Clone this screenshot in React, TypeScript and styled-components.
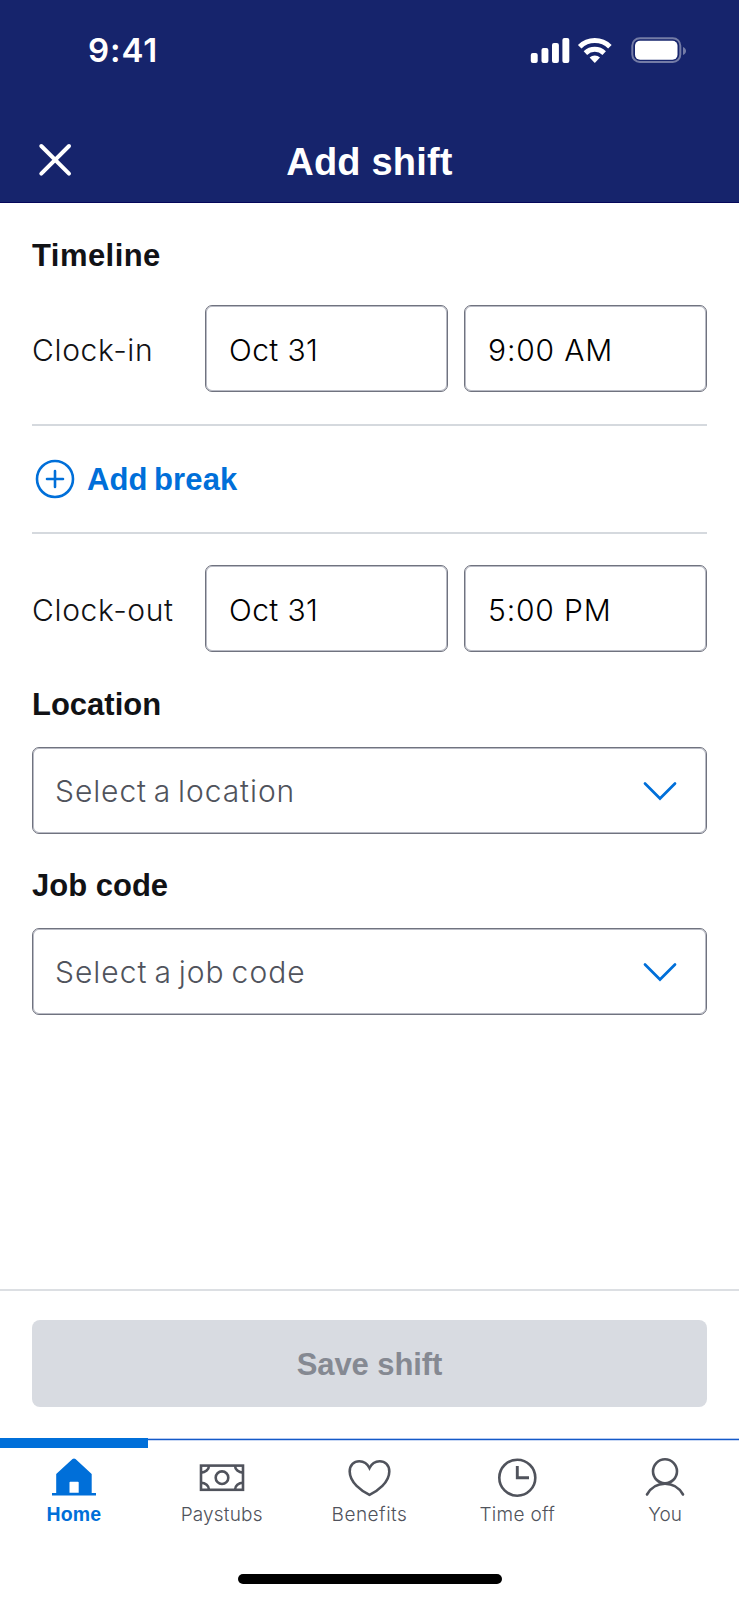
import React from 'react';
import styled, { createGlobalStyle } from 'styled-components';

const Global = createGlobalStyle`
  body { margin: 0; background: #fff; }
  *, *::before, *::after { box-sizing: border-box; }
  button { font: inherit; border: 0; background: none; padding: 0; margin: 0; }
`;

const bold = '"Liberation Sans", Arial, sans-serif';
const light = 'Inter, "Liberation Sans", sans-serif';

const Screen = styled.div`
  width: 739px;
  height: 1600px;
  display: flex;
  flex-direction: column;
  background: #fff;
  color: #111215;
  overflow: hidden;
`;

const Header = styled.header`
  height: 203px;
  flex: none;
  background: #16246c;
  border-bottom: 1px solid #05075a;
  color: #fff;
  display: flex;
  flex-direction: column;
`;

const StatusBar = styled.div`
  height: 118px;
  padding: 30px 53px 0 88px;
  display: flex;
  align-items: flex-start;
  justify-content: space-between;
  svg { margin-top: 6px; }
`;

const Clock = styled.span`
  font: 600 33px/40px ${light};
  letter-spacing: 0.9px;
`;

const TitleBar = styled.div`
  height: 84px;
  padding: 0 32px;
  display: grid;
  grid-template-columns: 46px 1fr 46px;
  align-items: center;
`;

const CloseButton = styled.button`
  width: 46px;
  height: 84px;
  color: #fff;
  svg { display: block; }
`;

const Title = styled.h1`
  margin: 4px 0 0;
  font: 700 38px/46px ${bold};
  letter-spacing: 0.2px;
  text-align: center;
`;

const Form = styled.main`
  flex: 1;
  padding: 34px 32px 0;
  display: flex;
  flex-direction: column;
`;

const Heading = styled.h2<{ $track?: number }>`
  margin: 0;
  height: 38px;
  font: 700 31px/38px ${bold};
  letter-spacing: ${p => p.$track ?? 0}px;
`;

const FieldRow = styled.div<{ $top: number; $bottom?: number }>`
  margin: ${p => p.$top}px 0 ${p => p.$bottom ?? 0}px;
  display: grid;
  grid-template-columns: 157px 243px 243px;
  column-gap: 16px;
  align-items: center;
`;

const Label = styled.label`
  font: 300 30px/38px ${light};
  letter-spacing: 0.65px;
  white-space: nowrap;
  padding-top: 3px;
`;

const Field = styled.div<{ $track?: number }>`
  height: 87px;
  border: 1px solid #70737f;
  box-shadow: inset 0 0 0 1px #b9bbc5;
  border-radius: 7px;
  padding: 3px 23px 0;
  display: flex;
  align-items: center;
  font: 300 30px/38px ${light};
  letter-spacing: ${p => p.$track ?? 0}px;
  color: #000;
`;

const SelectBox = styled(Field)`
  justify-content: space-between;
  margin-top: 23px;
  margin-bottom: 33px;
  color: #50535c;
  padding: 0 29px 0 22px;
  word-spacing: -2.5px;
`;

const BreakRow = styled.div`
  margin-top: 32px;
  height: 110px;
  border-top: 2px solid #d5d9de;
  border-bottom: 2px solid #d5d9de;
  display: flex;
  align-items: center;
`;

const AddBreak = styled.button`
  display: flex;
  align-items: center;
  gap: 12px;
  padding-left: 3px;
  color: #006fd9;
  font: 700 31px/38px ${bold};
  letter-spacing: 0.15px;
  word-spacing: -2.5px;
  span { padding-top: 2px; }
`;

const Footer = styled.footer`
  height: 149px;
  flex: none;
  border-top: 2px solid #dcdfe3;
  padding: 29px 32px 0;
`;

const SaveButton = styled.button`
  width: 100%;
  height: 87px;
  padding-top: 3px;
  border-radius: 8px;
  background: #d8dbe1;
  color: #858992;
  font: 700 31px/38px ${bold};
  letter-spacing: -0.1px;
`;

const TabBar = styled.nav`
  height: 136px;
  flex: none;
  display: grid;
  grid-template-columns: repeat(5, 1fr);
`;

const Tab = styled.a<{ $active?: boolean; $track?: number }>`
  padding-top: 20px;
  box-shadow: ${p =>
    p.$active
      ? 'inset 0 10px #006fd9'
      : 'inset 0 1px #b5caf0, inset 0 2px #1459c8, inset 0 3px #c9d8f4'};
  display: flex;
  flex-direction: column;
  align-items: center;
  color: ${p => (p.$active ? '#006fd9' : '#50535c')};
  font: ${p => (p.$active ? `700 19.5px/26px ${bold}` : `300 19px/26px ${light}`)};
  letter-spacing: ${p => p.$track ?? 0}px;
  svg { display: block; margin-bottom: ${p => (p.$active ? 3 : 4)}px; }
`;

const HomeIndicator = styled.div`
  width: 264px;
  height: 10px;
  margin: 0 auto 16px;
  flex: none;
  border-radius: 5px;
  background: #000;
`;

const StatusIcons = () => (
  <svg width="156" height="28" viewBox="530 36 156 28" fill="#fff">
    <rect x="530.8" y="53" width="6.9" height="10" rx="2" />
    <rect x="541.5" y="48" width="6.9" height="15" rx="2" />
    <rect x="552" y="43" width="6.9" height="20" rx="2" />
    <rect x="562.4" y="38" width="6.9" height="25" rx="2" />
    <g fill="none" stroke="#fff" strokeWidth="5">
      <path d="M579.7 46.7a21.5 21.5 0 0 1 30.2 0" />
      <path d="M585.4 53.1a13.6 13.6 0 0 1 18.8 0" />
    </g>
    <path d="M589.6 57.6a7.5 7.5 0 0 1 10.4 0l-5.2 5.4z" />
    <rect x="632.3" y="38.2" width="48" height="23.800" rx="7.5" fill="none" stroke="#747ca6" strokeWidth="2" />
    <rect x="635" y="40.7" width="42.5" height="19" rx="5" />
    <path d="M683 47c4 1.5 4 6.5 0 8z" fill="#747ca6" />
  </svg>
);

const Chevron = () => (
  <svg width="34" height="20" viewBox="0 0 34 20" fill="none" stroke="#006fd9" strokeWidth="2.7" strokeLinecap="round">
    <path d="M2 2.5 17 17.5 32 2.5" />
  </svg>
);

const HomeIcon = () => (
  <svg width="46" height="40" viewBox="0 0 46 40" fill="currentColor">
    <path fillRule="evenodd" d="M21.5 1q1.5-1.2 3 0L40.7 16v19H45v2.5H1V35h4.2V16zM18.5 24.5v10.3h9.2V24.5q0-.8-.8-.8h-7.6q-.8 0-.8.8z" />
  </svg>
);

const line = { fill: 'none', stroke: 'currentColor', strokeWidth: 2.6 };

const MoneyIcon = () => (
  <svg width="46" height="40" viewBox="0 0 46 40" {...line}>
    <rect x="2" y="7.6" width="42" height="24.2" />
    <circle cx="23" cy="19.7" r="6.3" />
    <path d="M10 7.600a8 7 0 0 1-8 7M36 7.6a8 7 0 0 0 8 7M10 31.800a8 7 0 0 0-8-7M36 31.8a8 7 0 0 1 8-7" />
  </svg>
);

const HeartIcon = () => (
  <svg width="46" height="40" viewBox="0 0 46 40" {...line}>
    <path d="M23.5 36.800C15.500 33 3.700 24.500 3.700 13.500 3.700 7 8 3.200 13.300 3.200 18 3.200 21.500 5.800 23.500 10 25.500 5.800 29 3.200 33.700 3.200 39 3.200 43.300 7 43.300 13.500 43.300 24.500 31.500 33 23.500 36.800z" />
  </svg>
);

const ClockIcon = () => (
  <svg width="46" height="40" viewBox="0 0 46 40" {...line}>
    <circle cx="23.3" cy="19.7" r="18" />
    <path d="M23.3 8V19.7h11.700" strokeWidth="2.9" />
  </svg>
);

const PersonIcon = () => (
  <svg width="46" height="40" viewBox="0 0 46 40" {...line}>
    <circle cx="23" cy="13.3" r="12" />
    <path d="M5 36.5C9 29.5 15.5 25.8 23 25.8S37 29.5 41 36.5" strokeLinecap="round" />
  </svg>
);

export default function App() {
  return (
    <Screen>
      <Global />
      <Header>
        <StatusBar>
          <Clock>9:41</Clock>
          <StatusIcons />
        </StatusBar>
        <TitleBar>
          <CloseButton aria-label="Close">
            <svg width="46" height="46" viewBox="0 0 46 46" stroke="currentColor" strokeWidth="4" strokeLinecap="round">
              <path d="M9.3 9 37 36.7M37 9 9.3 36.7" />
            </svg>
          </CloseButton>
          <Title>Add shift</Title>
        </TitleBar>
      </Header>
      <Form>
        <Heading $track={0.45}>Timeline</Heading>
        <FieldRow $top={30}>
          <Label>Clock-in</Label>
          <Field $track={0.4}>Oct 31</Field>
          <Field $track={0.85}>9:00 AM</Field>
        </FieldRow>
        <BreakRow>
          <AddBreak>
            <svg width="40" height="40" viewBox="0 0 40 40" fill="none" stroke="currentColor" strokeWidth="2.6">
              <circle cx="20" cy="20" r="18" />
              <path d="M20 12v16M12 20h16" strokeLinecap="round" />
            </svg>
            <span>Add break</span>
          </AddBreak>
        </BreakRow>
        <FieldRow $top={31} $bottom={34}>
          <Label>Clock-out</Label>
          <Field $track={0.4}>Oct 31</Field>
          <Field $track={0.85}>5:00 PM</Field>
        </FieldRow>
        <Heading>Location</Heading>
        <SelectBox $track={0.92}>Select a location<Chevron /></SelectBox>
        <Heading>Job code</Heading>
        <SelectBox $track={1}>Select a job code<Chevron /></SelectBox>
      </Form>
      <Footer>
        <SaveButton>Save shift</SaveButton>
      </Footer>
      <TabBar>
        <Tab $active $track={0.15}><HomeIcon />Home</Tab>
        <Tab $track={0.2}><MoneyIcon />Paystubs</Tab>
        <Tab $track={0.5}><HeartIcon />Benefits</Tab>
        <Tab $track={0.3}><ClockIcon />Time off</Tab>
        <Tab><PersonIcon />You</Tab>
      </TabBar>
      <HomeIndicator />
    </Screen>
  );
}
